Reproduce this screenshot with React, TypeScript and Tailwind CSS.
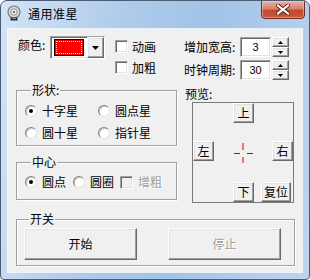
import React from "react";

const font = "font-['Noto_Sans_CJK_SC','Liberation_Sans',sans-serif]";
const raised =
  "border border-t-white border-l-white border-r-[#696969] border-b-[#696969] bg-[#f0f0f0] shadow-[inset_-1px_-1px_0_#a0a0a0,inset_1px_1px_0_#e3e3e3]";
const sunken =
  "border border-t-[#a0a0a0] border-l-[#a0a0a0] border-r-white border-b-white shadow-[inset_1px_1px_0_#696969,inset_-1px_-1px_0_#e3e3e3]";
const etched = "border border-[#a0a0a0] shadow-[inset_1px_1px_0_#fff,1px_1px_0_#fff]";

function Radio({ checked = false }: { checked?: boolean }) {
  return (
    <span className="w-[12px] h-[12px] shrink-0 rounded-full bg-white border border-t-[#808080] border-l-[#808080] border-r-[#e3e3e3] border-b-[#e3e3e3] shadow-[inset_1px_1px_0_#c8c8c8] flex items-center justify-center">
      {checked && <span className="w-[4px] h-[4px] rounded-full bg-black" />}
    </span>
  );
}

function Check({ disabled = false }: { disabled?: boolean }) {
  return <span className={`w-[13px] h-[13px] shrink-0 ${disabled ? "bg-[#f0f0f0]" : "bg-white"} ${sunken}`} />;
}

function Arrow({ up = false }: { up?: boolean }) {
  return (
    <svg width="5" height="3" viewBox="0 0 5 3">
      <path d={up ? "M2.5 0 L5 3 L0 3 Z" : "M0 0 L5 0 L2.5 3 Z"} fill="#000" />
    </svg>
  );
}

function Spin({ value }: { value: string }) {
  return (
    <div className="flex h-[20px]">
      <div
        className={`w-[31px] h-full bg-white ${sunken} flex items-center justify-center text-[11px] font-['Liberation_Sans',sans-serif]`}
      >
        {value}
      </div>
      <div className="w-[17px] h-full flex flex-col ml-[1px]">
        <div className={`h-1/2 ${raised} flex items-center justify-center`}>
          <Arrow up />
        </div>
        <div className={`h-1/2 ${raised} flex items-center justify-center`}>
          <Arrow />
        </div>
      </div>
    </div>
  );
}

function PBtn({ children, w = "w-[21px]" }: { children: React.ReactNode; w?: string }) {
  return (
    <div className={`${w} h-[20px] ${raised} flex items-center justify-center text-[12px] leading-[14px]`}>
      {children}
    </div>
  );
}

function Legend({ children, ml = "ml-[6px]" }: { children: React.ReactNode; ml?: string }) {
  return <legend className={`${ml} px-[1px] bg-[#f0f0f0] text-[12px] leading-[14px]`}>{children}</legend>;
}

export default function App() {
  return (
    <div className={`w-[310px] h-[280px] ${font} text-black text-[12px]`}>
      <div className="w-full h-full flex flex-col rounded-t-[7px] rounded-b-[4px] border border-[#4b5d72] bg-[linear-gradient(100deg,#d3e5f7_0%,#aecbea_35%,#a2c3e7_60%,#bcd5ef_100%)] overflow-hidden">
        {/* title bar */}
        <div className="h-[28px] flex items-start shrink-0">
          <svg className="ml-[5px] mt-[4px]" width="16" height="16" viewBox="0 0 16 16">
            <circle cx="8" cy="7" r="6" fill="#d6d9dc" stroke="#767b80" strokeWidth="1.2" />
            <circle cx="8" cy="7" r="3.2" fill="#f2f2f2" stroke="#8a8f94" />
            <circle cx="8" cy="7" r="1.2" fill="#6d7278" />
            <path d="M4.5 12.5 H11.5 V15.5 H4.5 Z" fill="#2b2b2b" />
            <path d="M6 13.5 H10" stroke="#888" />
          </svg>
          <span className="ml-[6px] mt-[6px] text-[12px] leading-[14px] tracking-[0.5px]">通用准星</span>
          <div className="ml-auto mr-[4px] -mt-[1px] w-[44px] h-[19px] rounded-b-[4px] border border-[#6e2a1f] bg-[linear-gradient(180deg,#eab3a6_0%,#d9806f_45%,#c24a33_55%,#c8563c_100%)] shadow-[inset_0_0_0_1px_rgba(255,220,210,0.45)] flex items-center justify-center">
            <svg width="14" height="11" viewBox="0 0 14 11">
              <path d="M2 1.5 L12 9.5 M12 1.5 L2 9.5" stroke="#5a1a10" strokeWidth="4" strokeLinecap="square" />
              <path d="M2 1.5 L12 9.5 M12 1.5 L2 9.5" stroke="#fff" strokeWidth="2.2" strokeLinecap="square" />
            </svg>
          </div>
        </div>

        {/* client area */}
        <div className="mx-[7px] h-[243px] bg-[#f0f0f0] shadow-[0_0_0_1px_rgba(255,255,255,0.75)] flex flex-col pl-[8px] pt-[6px]">
          <div className="flex h-[177px]">
            {/* left column */}
            <div className="w-[161px] flex flex-col">
              <div className="flex h-[48px]">
                <span className="ml-[2px] mt-[3px] w-[32px] leading-[14px]">颜色:</span>
                <div className={`mt-[1px] w-[55px] h-[23px] bg-white ${sunken} flex`}>
                  <div className="ml-[3px] mt-[2px] w-[30px] h-[17px] border border-black bg-[#ff0000] p-[1px]">
                    <div className="w-full h-full border border-dotted border-[#7fffff]" />
                  </div>
                  <div className={`ml-auto w-[17px] h-full ${raised} flex items-center justify-center`}>
                    <svg width="7" height="4" viewBox="0 0 7 4">
                      <path d="M0 0 H7 L3.5 4 Z" fill="#000" />
                    </svg>
                  </div>
                </div>
                <div className="ml-[10px] mt-[5px] flex flex-col gap-[8px]">
                  <div className="flex items-center h-[13px]">
                    <Check />
                    <span className="ml-[4px] leading-[14px]">动画</span>
                  </div>
                  <div className="flex items-center h-[13px]">
                    <Check />
                    <span className="ml-[4px] leading-[14px]">加粗</span>
                  </div>
                </div>
              </div>

              <fieldset className={`w-[161px] ${etched} pl-[8px] pt-[7px] pb-[5px]`}>
                <Legend>形状:</Legend>
                <div className="grid grid-cols-[73px_1fr] gap-y-[8px]">
                  <div className="flex items-center h-[14px] gap-[5px]">
                    <Radio checked />
                    <span className="leading-[14px]">十字星</span>
                  </div>
                  <div className="flex items-center h-[14px] gap-[5px]">
                    <Radio />
                    <span className="leading-[14px]">圆点星</span>
                  </div>
                  <div className="flex items-center h-[14px] gap-[5px]">
                    <Radio />
                    <span className="leading-[14px]">圆十星</span>
                  </div>
                  <div className="flex items-center h-[14px] gap-[5px]">
                    <Radio />
                    <span className="leading-[14px]">指针星</span>
                  </div>
                </div>
              </fieldset>

              <fieldset className={`mt-[9px] w-[161px] ${etched} pl-[8px] pt-[6px] pb-[10px]`}>
                <Legend>中心</Legend>
                <div className="flex items-center h-[14px]">
                  <div className="flex items-center gap-[5px]">
                    <Radio checked />
                    <span className="leading-[14px]">圆点</span>
                  </div>
                  <div className="ml-[7px] flex items-center gap-[5px]">
                    <Radio />
                    <span className="leading-[14px]">圆圈</span>
                  </div>
                  <div className="ml-[6px] flex items-center">
                    <Check disabled />
                    <span className="ml-[5px] leading-[14px] text-[#a0a0a0] [text-shadow:1px_1px_0_#fff]">增粗</span>
                  </div>
                </div>
              </fieldset>
            </div>

            {/* right column */}
            <div className="ml-[7px] flex flex-col">
              <div className="mt-[2px] flex items-center h-[20px]">
                <span className="w-[56px] leading-[14px]">增加宽高:</span>
                <Spin value="3" />
              </div>
              <div className="mt-[3px] flex items-center h-[20px]">
                <span className="w-[56px] leading-[14px]">时钟周期:</span>
                <Spin value="30" />
              </div>
              <span className="mt-[7px] ml-[1px] leading-[14px]">预览:</span>
              <div className="ml-[8px] mt-[1px] w-[102px] h-[101px] border border-[#7a7a7a] flex flex-col">
                <div className="pl-[40px]">
                  <PBtn>上</PBtn>
                </div>
                <div className="mt-[18px] flex justify-between">
                  <PBtn>左</PBtn>
                  <svg className="mt-[2px]" width="20" height="20" viewBox="0 0 20 20">
                    <path d="M10 0 V7 M10 14 V20 M1 10.5 H7 M14 10.5 H20" stroke="#e00000" strokeWidth="1" />
                  </svg>
                  <PBtn>右</PBtn>
                </div>
                <div className="mt-auto flex pl-[40px] pr-[2px]">
                  <PBtn>下</PBtn>
                  <div className="ml-auto">
                    <PBtn w="w-[30px]">复位</PBtn>
                  </div>
                </div>
              </div>
            </div>
          </div>

          <fieldset className={`w-[279px] ${etched} pl-[7px] pt-[2px] pb-[5px]`}>
            <Legend ml="ml-[5px]">开关</Legend>
            <div className="flex">
              <div className={`w-[113px] h-[32px] ${raised} flex items-center justify-center leading-[14px]`}>开始</div>
              <div
                className={`ml-[31px] w-[113px] h-[32px] ${raised} flex items-center justify-center leading-[14px] text-[#a0a0a0] [text-shadow:1px_1px_0_#fff]`}
              >
                停止
              </div>
            </div>
          </fieldset>
        </div>
      </div>
    </div>
  );
}
